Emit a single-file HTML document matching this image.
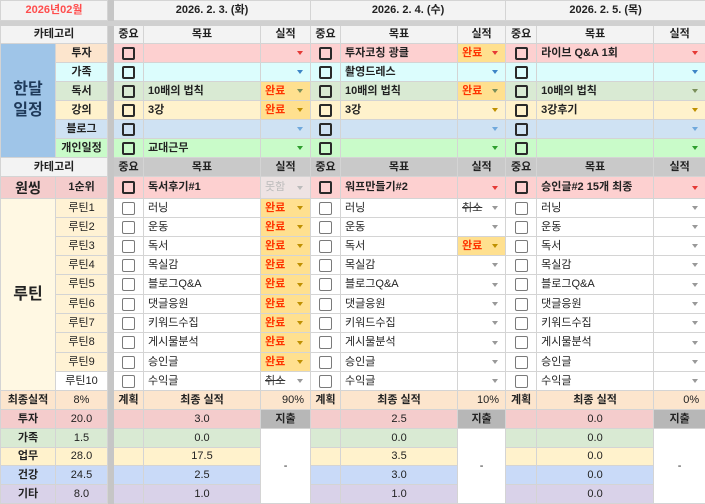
<!DOCTYPE html>
<html><head><meta charset="utf-8"><style>
*{margin:0;padding:0;box-sizing:border-box}
body{width:705px;height:503px;overflow:hidden;background:#fff;font-family:"Liberation Sans","Noto Sans CJK KR",sans-serif;font-size:11px;color:#222}
table{border-collapse:collapse;table-layout:fixed;width:705px}
td{border:1px solid #d4d4d4;padding:0 4px;white-space:nowrap;overflow:hidden;position:relative;vertical-align:middle;line-height:1}
.c{text-align:center;padding:0}
.b{font-weight:bold}
.sep{background:#c6c6c6;border-color:#c6c6c6;padding:0}
.h{background:#f3f3f3;text-align:center;font-weight:bold}
.g{background:#c9c9c9;text-align:center;font-weight:bold}
.cb{display:inline-block;width:13px;height:13px;border:2px solid #2a2a2a;border-radius:2px;vertical-align:middle}
.cl{border:1.5px solid #7a7a7a}
.a{position:absolute;right:7px;top:50%;margin-top:-2px;width:0;height:0;border-left:3.5px solid transparent;border-right:3.5px solid transparent;border-top:4px solid #999}
.ok{color:#ff3300;font-weight:bold;background:#ffe08f !important}
.ok .a{border-top-color:#bf9000}
.cx{text-decoration:line-through;color:#333}
.p td.d{background:#fdd0d0}.p .a{border-top-color:#e53935}
.cy td.d{background:#dcfdfd}.cy .a{border-top-color:#3d85c6}
.gr td.d{background:#d9ead3}.gr .a{border-top-color:#7a8f5a}
.ye td.d{background:#fff2cc}.ye .a{border-top-color:#bf9000}
.bl td.d{background:#cfe2f3}.bl .a{border-top-color:#6fa8dc}
.lg td.d{background:#c9fbc9}.lg .a{border-top-color:#2e9e2e}
.r td.d{background:#fff}
.r td.lab{background:#fff2d4;text-align:center}
.bt td{text-align:center}
</style></head><body>
<table>
<colgroup><col style="width:55px"><col style="width:52px"><col style="width:6px"><col style="width:30px"><col style="width:117px"><col style="width:50px"><col style="width:30px"><col style="width:117px"><col style="width:48px"><col style="width:31px"><col style="width:117px"><col style="width:52px"></colgroup>
<tr style="height:20px"><td colspan="2" class="h" style="color:#ff4d4d">2026년02월</td><td class="sep"></td><td colspan="3" class="h">2026. 2. 3. (화)</td><td colspan="3" class="h">2026. 2. 4. (수)</td><td colspan="3" class="h">2026. 2. 5. (목)</td></tr>
<tr style="height:5px"><td colspan="12" style="background:#d0d0d0;border-color:#d0d0d0;padding:0"></td></tr>
<tr style="height:18px"><td colspan="2" class="h">카테고리</td><td class="sep"></td><td class="h">중요</td><td class="h">목표</td><td class="h">실적</td><td class="h">중요</td><td class="h">목표</td><td class="h">실적</td><td class="h">중요</td><td class="h">목표</td><td class="h">실적</td></tr>
<tr class="p" style="height:19px"><td rowspan="6" class="c b" style="background:#9fc5e8;font-size:16px;line-height:1.3;color:#1f3a5a">한달<br>일정</td><td class="c b" style="background:#fce5cd">투자</td><td class="sep"></td><td class="d c"><span class="cb"></span></td><td class="d b"></td><td class="d"><span class="a"></span></td><td class="d c"><span class="cb"></span></td><td class="d b">투자코칭 광클</td><td class="d ok">완료<span class="a"></span></td><td class="d c"><span class="cb"></span></td><td class="d b">라이브 Q&amp;A 1회</td><td class="d"><span class="a"></span></td></tr>
<tr class="cy" style="height:19px"><td class="c b" style="background:#dcfdfd">가족</td><td class="sep"></td><td class="d c"><span class="cb"></span></td><td class="d b"></td><td class="d"><span class="a"></span></td><td class="d c"><span class="cb"></span></td><td class="d b">촬영드레스</td><td class="d"><span class="a"></span></td><td class="d c"><span class="cb"></span></td><td class="d b"></td><td class="d"><span class="a"></span></td></tr>
<tr class="gr" style="height:19px"><td class="c b" style="background:#d9ead3">독서</td><td class="sep"></td><td class="d c"><span class="cb"></span></td><td class="d b">10배의 법칙</td><td class="d ok">완료<span class="a"></span></td><td class="d c"><span class="cb"></span></td><td class="d b">10배의 법칙</td><td class="d ok">완료<span class="a"></span></td><td class="d c"><span class="cb"></span></td><td class="d b">10배의 법칙</td><td class="d"><span class="a"></span></td></tr>
<tr class="ye" style="height:19px"><td class="c b" style="background:#fff2cc">강의</td><td class="sep"></td><td class="d c"><span class="cb"></span></td><td class="d b">3강</td><td class="d ok">완료<span class="a"></span></td><td class="d c"><span class="cb"></span></td><td class="d b">3강</td><td class="d"><span class="a"></span></td><td class="d c"><span class="cb"></span></td><td class="d b">3강후기</td><td class="d"><span class="a"></span></td></tr>
<tr class="bl" style="height:19px"><td class="c b" style="background:#cfe2f3">블로그</td><td class="sep"></td><td class="d c"><span class="cb"></span></td><td class="d b"></td><td class="d"><span class="a"></span></td><td class="d c"><span class="cb"></span></td><td class="d b"></td><td class="d"><span class="a"></span></td><td class="d c"><span class="cb"></span></td><td class="d b"></td><td class="d"><span class="a"></span></td></tr>
<tr class="lg" style="height:19px"><td class="c b" style="background:#c9fbc9">개인일정</td><td class="sep"></td><td class="d c"><span class="cb"></span></td><td class="d b">교대근무</td><td class="d"><span class="a"></span></td><td class="d c"><span class="cb"></span></td><td class="d b"></td><td class="d"><span class="a"></span></td><td class="d c"><span class="cb"></span></td><td class="d b"></td><td class="d"><span class="a"></span></td></tr>
<tr style="height:19px"><td colspan="2" class="h">카테고리</td><td class="sep"></td><td class="g">중요</td><td class="g">목표</td><td class="g">실적</td><td class="g">중요</td><td class="g">목표</td><td class="g">실적</td><td class="g">중요</td><td class="g">목표</td><td class="g">실적</td></tr>
<tr class="p" style="height:22px"><td class="c b" style="background:#f4cccc;font-size:14px">원씽</td><td class="c b" style="background:#f4cccc">1순위</td><td class="sep"></td><td class="d c"><span class="cb"></span></td><td class="d b">독서후기#1</td><td class="d" style="background:#eee3e3;color:#bbb">못함<span class="a" style="border-top-color:#bbb"></span></td><td class="d c"><span class="cb"></span></td><td class="d b">워프만들기#2</td><td class="d"><span class="a"></span></td><td class="d c"><span class="cb"></span></td><td class="d b">승인글#2 15개 최종</td><td class="d"><span class="a"></span></td></tr>
<tr class="r" style="height:19px"><td rowspan="10" class="c b" style="background:#fff8e3;font-size:16px">루틴</td><td class="lab">루틴1</td><td class="sep"></td><td class="d c"><span class="cb cl"></span></td><td class="d">러닝</td><td class="d ok">완료<span class="a"></span></td><td class="d c"><span class="cb cl"></span></td><td class="d">러닝</td><td class="d cx">취소<span class="a"></span></td><td class="d c"><span class="cb cl"></span></td><td class="d">러닝</td><td class="d"><span class="a"></span></td></tr>
<tr class="r" style="height:19px"><td class="lab">루틴2</td><td class="sep"></td><td class="d c"><span class="cb cl"></span></td><td class="d">운동</td><td class="d ok">완료<span class="a"></span></td><td class="d c"><span class="cb cl"></span></td><td class="d">운동</td><td class="d"><span class="a"></span></td><td class="d c"><span class="cb cl"></span></td><td class="d">운동</td><td class="d"><span class="a"></span></td></tr>
<tr class="r" style="height:19px"><td class="lab">루틴3</td><td class="sep"></td><td class="d c"><span class="cb cl"></span></td><td class="d">독서</td><td class="d ok">완료<span class="a"></span></td><td class="d c"><span class="cb cl"></span></td><td class="d">독서</td><td class="d ok">완료<span class="a"></span></td><td class="d c"><span class="cb cl"></span></td><td class="d">독서</td><td class="d"><span class="a"></span></td></tr>
<tr class="r" style="height:19px"><td class="lab">루틴4</td><td class="sep"></td><td class="d c"><span class="cb cl"></span></td><td class="d">목실감</td><td class="d ok">완료<span class="a"></span></td><td class="d c"><span class="cb cl"></span></td><td class="d">목실감</td><td class="d"><span class="a"></span></td><td class="d c"><span class="cb cl"></span></td><td class="d">목실감</td><td class="d"><span class="a"></span></td></tr>
<tr class="r" style="height:20px"><td class="lab">루틴5</td><td class="sep"></td><td class="d c"><span class="cb cl"></span></td><td class="d">블로그Q&amp;A</td><td class="d ok">완료<span class="a"></span></td><td class="d c"><span class="cb cl"></span></td><td class="d">블로그Q&amp;A</td><td class="d"><span class="a"></span></td><td class="d c"><span class="cb cl"></span></td><td class="d">블로그Q&amp;A</td><td class="d"><span class="a"></span></td></tr>
<tr class="r" style="height:19px"><td class="lab">루틴6</td><td class="sep"></td><td class="d c"><span class="cb cl"></span></td><td class="d">댓글응원</td><td class="d ok">완료<span class="a"></span></td><td class="d c"><span class="cb cl"></span></td><td class="d">댓글응원</td><td class="d"><span class="a"></span></td><td class="d c"><span class="cb cl"></span></td><td class="d">댓글응원</td><td class="d"><span class="a"></span></td></tr>
<tr class="r" style="height:19px"><td class="lab">루틴7</td><td class="sep"></td><td class="d c"><span class="cb cl"></span></td><td class="d">키워드수집</td><td class="d ok">완료<span class="a"></span></td><td class="d c"><span class="cb cl"></span></td><td class="d">키워드수집</td><td class="d"><span class="a"></span></td><td class="d c"><span class="cb cl"></span></td><td class="d">키워드수집</td><td class="d"><span class="a"></span></td></tr>
<tr class="r" style="height:20px"><td class="lab">루틴8</td><td class="sep"></td><td class="d c"><span class="cb cl"></span></td><td class="d">게시물분석</td><td class="d ok">완료<span class="a"></span></td><td class="d c"><span class="cb cl"></span></td><td class="d">게시물분석</td><td class="d"><span class="a"></span></td><td class="d c"><span class="cb cl"></span></td><td class="d">게시물분석</td><td class="d"><span class="a"></span></td></tr>
<tr class="r" style="height:19px"><td class="lab">루틴9</td><td class="sep"></td><td class="d c"><span class="cb cl"></span></td><td class="d">승인글</td><td class="d ok">완료<span class="a"></span></td><td class="d c"><span class="cb cl"></span></td><td class="d">승인글</td><td class="d"><span class="a"></span></td><td class="d c"><span class="cb cl"></span></td><td class="d">승인글</td><td class="d"><span class="a"></span></td></tr>
<tr class="r" style="height:19px"><td class="lab" style="background:#fff">루틴10</td><td class="sep"></td><td class="d c"><span class="cb cl"></span></td><td class="d">수익글</td><td class="d cx">취소<span class="a"></span></td><td class="d c"><span class="cb cl"></span></td><td class="d">수익글</td><td class="d"><span class="a"></span></td><td class="d c"><span class="cb cl"></span></td><td class="d">수익글</td><td class="d"><span class="a"></span></td></tr>
<tr class="bt" style="height:19px;background:#fce5cd"><td class="b">최종실적</td><td>8%</td><td class="sep"></td><td class="b">계획</td><td class="b">최종 실적</td><td style="text-align:right;padding-right:6px">90%</td><td class="b">계획</td><td class="b">최종 실적</td><td style="text-align:right;padding-right:6px">10%</td><td class="b">계획</td><td class="b">최종 실적</td><td style="text-align:right;padding-right:6px">0%</td></tr>
<tr class="bt" style="height:19px;background:#f4cccc"><td class="b">투자</td><td>20.0</td><td class="sep"></td><td></td><td>3.0</td><td class="b" style="background:#b7b7b7">지출</td><td></td><td>2.5</td><td class="b" style="background:#b7b7b7">지출</td><td></td><td>0.0</td><td class="b" style="background:#b7b7b7">지출</td></tr>
<tr class="bt" style="height:19px;background:#d9ead3"><td class="b">가족</td><td>1.5</td><td class="sep"></td><td></td><td>0.0</td><td rowspan="4" style="background:#fff">-</td><td></td><td>0.0</td><td rowspan="4" style="background:#fff">-</td><td></td><td>0.0</td><td rowspan="4" style="background:#fff">-</td></tr>
<tr class="bt" style="height:18px;background:#fff2cc"><td class="b">업무</td><td>28.0</td><td class="sep"></td><td></td><td>17.5</td><td></td><td>3.5</td><td></td><td>0.0</td></tr>
<tr class="bt" style="height:19px;background:#c9daf8"><td class="b">건강</td><td>24.5</td><td class="sep"></td><td></td><td>2.5</td><td></td><td>3.0</td><td></td><td>0.0</td></tr>
<tr class="bt" style="height:19px;background:#d9d2e9"><td class="b">기타</td><td>8.0</td><td class="sep"></td><td></td><td>1.0</td><td></td><td>1.0</td><td></td><td>0.0</td></tr>
</table>
</body></html>
